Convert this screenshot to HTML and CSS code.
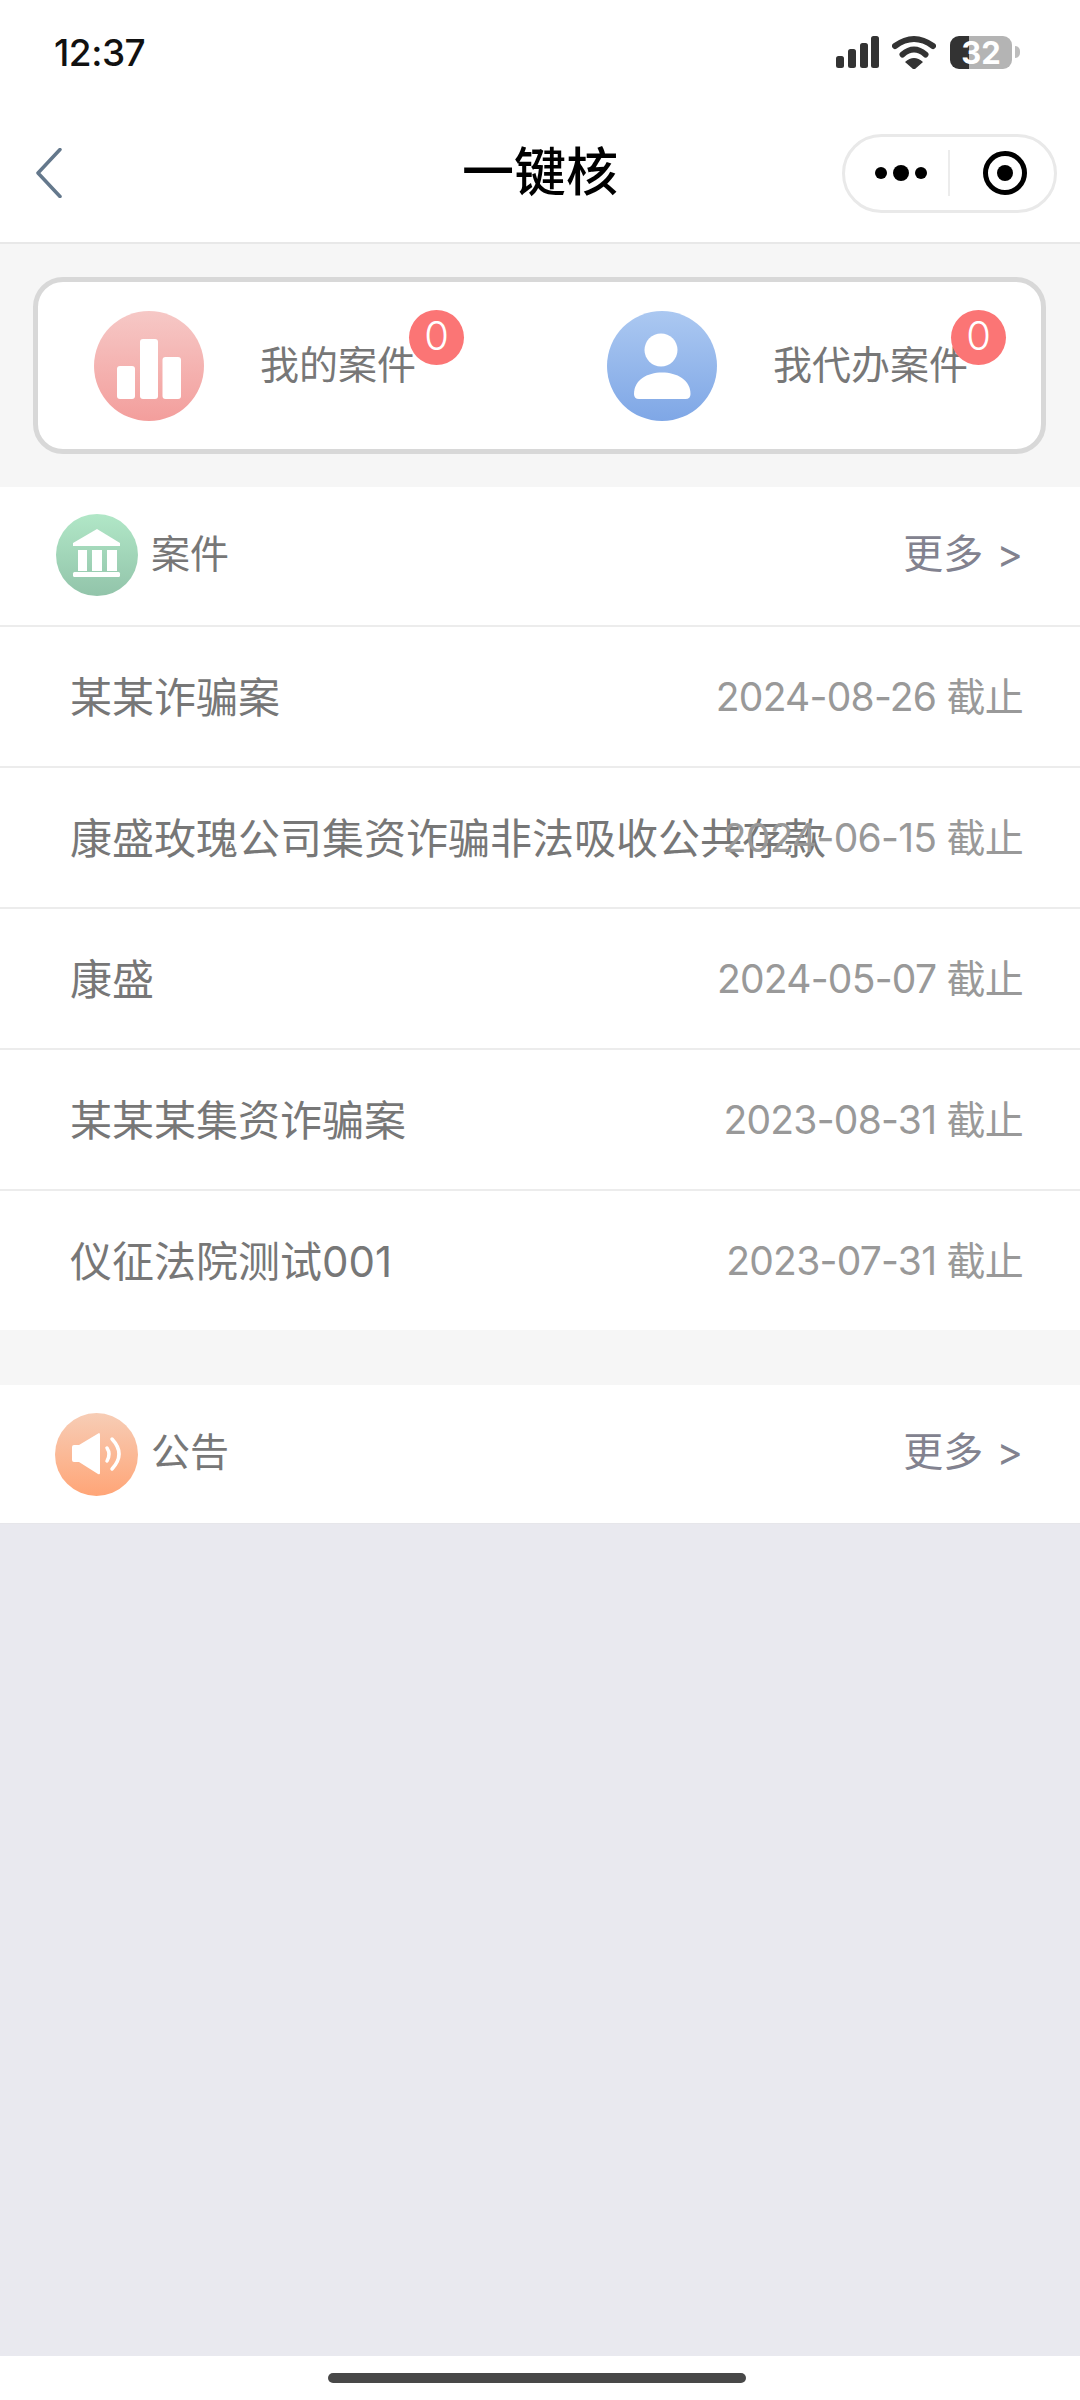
FILE: index.html
```html
<!DOCTYPE html>
<html lang="zh-CN">
<head>
<meta charset="utf-8">
<title>一键核</title>
<link rel="stylesheet" href="styles.css">
</head>
<body>
<div class="page">
  <header class="top">
    <div class="status">
      <span class="time">12:37</span>
      <div class="status-icons">
        <svg class="signal" width="43" height="32" viewBox="0 0 43 32"><rect x="0" y="20" width="8" height="12" rx="2.5"/><rect x="12" y="13" width="8" height="19" rx="2.5"/><rect x="24" y="7" width="8" height="25" rx="2.5"/><rect x="35" y="0" width="8" height="32" rx="2.5"/></svg>
        <svg class="wifi" width="44" height="34" viewBox="0 0 44 34"><path d="M3 11Q22 -3 41 11" fill="none" stroke="#333" stroke-width="6" stroke-linecap="round"/><path d="M10.500 19.500Q22 9.500 33.500 19.500" fill="none" stroke="#333" stroke-width="6" stroke-linecap="round"/><path d="M13 27Q22 19 31 27L23 34Q22 35 21 34Z" fill="#333"/></svg>
        <div class="battery"><span class="battery-num">32</span></div>
        <span class="battery-nub"></span>
      </div>
    </div>
    <nav class="nav">
      <svg class="back" width="26" height="50" viewBox="0 0 26 50"><path d="M24 1.500L2 25L24 48.500" fill="none" stroke="#64788c" stroke-width="3.500" stroke-linecap="round" stroke-linejoin="round"/></svg>
      <h1 class="title">一键核</h1>
      <div class="capsule">
        <svg class="more" width="52" height="16" viewBox="0 0 52 16"><circle cx="6" cy="8" r="6"/><circle cx="26" cy="8" r="8"/><circle cx="46" cy="8" r="6"/></svg>
        <span class="capsule-line"></span>
        <svg class="target" width="44" height="44" viewBox="0 0 44 44"><circle cx="22" cy="22" r="19.500" fill="none" stroke="#000" stroke-width="5"/><circle cx="22" cy="22" r="8"/></svg>
      </div>
    </nav>
  </header>

  <section class="summary">
    <div class="card">
      <div class="stat stat-first">
        <svg class="stat-icon" width="110" height="110" viewBox="0 0 110 110"><defs><linearGradient id="gr" x1="0" y1="0" x2="0" y2="1"><stop offset="0" stop-color="#f6c8c6"/><stop offset="1" stop-color="#f39e9c"/></linearGradient></defs><circle cx="55" cy="55" r="55" fill="url(#gr)"/><rect x="23" y="55" width="18" height="33" rx="3" fill="#fff"/><rect x="46" y="28" width="18" height="60" rx="3" fill="#fff"/><rect x="68.500" y="46" width="18.500" height="42" rx="3" fill="#fff"/></svg>
        <div class="stat-label">我的案件<span class="badge badge-first">0</span></div>
      </div>
      <div class="stat">
        <svg class="stat-icon" width="110" height="110" viewBox="0 0 110 110"><defs><linearGradient id="gb" x1="0" y1="0" x2="0" y2="1"><stop offset="0" stop-color="#abc8f1"/><stop offset="1" stop-color="#7fa7e6"/></linearGradient></defs><circle cx="55" cy="55" r="55" fill="url(#gb)"/><circle cx="54" cy="39" r="16.500" fill="#fff"/><path d="M32 88Q27 88 27 83C27 69 40 61.500 55 61.500C70 61.500 83.500 69 83.500 83Q83.500 88 78.500 88Z" fill="#fff"/></svg>
        <div class="stat-label">我代办案件<span class="badge badge-second">0</span></div>
      </div>
    </div>
  </section>

  <section class="panel">
    <div class="panel-head panel-head-line">
      <div class="panel-name">
        <svg class="panel-icon" width="82" height="82" viewBox="0 0 82 82"><defs><linearGradient id="gg" x1="0" y1="0" x2="0" y2="1"><stop offset="0" stop-color="#b1e7c7"/><stop offset="1" stop-color="#92c4aa"/></linearGradient></defs><circle cx="41" cy="41" r="41" fill="url(#gg)"/><path d="M41 15L64 29V32H17V29Z" fill="#fff"/><rect x="22" y="36" width="9" height="21" fill="#fff"/><rect x="36" y="36" width="10" height="21" fill="#fff"/><rect x="51" y="36" width="10" height="21" fill="#fff"/><rect x="17" y="58" width="47" height="5" rx="1.500" fill="#fff"/></svg>
        <span class="panel-label">案件</span>
      </div>
      <span class="more-link">更多 &gt;</span>
    </div>
    <div class="row"><span class="row-title">某某诈骗案</span><span class="row-date">2024-08-26 截止</span></div>
    <div class="row"><span class="row-title">康盛玫瑰公司集资诈骗非法吸收公共存款</span><span class="row-date">2024-06-15 截止</span></div>
    <div class="row"><span class="row-title">康盛</span><span class="row-date">2024-05-07 截止</span></div>
    <div class="row"><span class="row-title">某某某集资诈骗案</span><span class="row-date">2023-08-31 截止</span></div>
    <div class="row row-last"><span class="row-title">仪征法院测试001</span><span class="row-date">2023-07-31 截止</span></div>
  </section>

  <section class="panel panel-notice">
    <div class="panel-head panel-head-notice">
      <div class="panel-name">
        <svg width="83" height="83" viewBox="0 0 83 83"><defs><linearGradient id="go" x1="0" y1="0" x2="0" y2="1"><stop offset="0" stop-color="#f7cdb6"/><stop offset="1" stop-color="#ffa577"/></linearGradient></defs><circle cx="41.500" cy="41.500" r="41.500" fill="url(#go)"/><path d="M17 34Q17 32 19 32H24L44 20Q45 20 45 22V60Q45 62 43 61L24 49H19Q17 49 17 47Z" fill="#fff"/><path d="M52 35Q56 41 52 48" fill="none" stroke="#fff" stroke-width="3.500" stroke-linecap="round"/><path d="M57 26Q71 41 57 56" fill="none" stroke="#fff" stroke-width="3.500" stroke-linecap="round"/></svg>
        <span class="panel-label">公告</span>
      </div>
      <span class="more-link">更多 &gt;</span>
    </div>
  </section>

  <div class="filler"></div>
  <footer class="home"><span class="home-bar"></span></footer>
</div>
</body>
</html>
```

FILE: styles.css
```css
* { box-sizing: border-box; }
html, body { margin: 0; padding: 0; }
body {
  background: #fff;
  font-family: Inter, "Noto Sans CJK SC", sans-serif;
}
.page {
  width: 1080px;
  height: 2400px;
  display: flex;
  flex-direction: column;
  overflow: hidden;
  background: #f6f6f6;
}

/* header */
.top { height: 244px; background: #fff; border-bottom: 2px solid #e8e8e8; flex: none; }
.status {
  height: 104px;
  display: flex;
  justify-content: space-between;
  align-items: center;
  padding: 0 60px 0 54px;
}
.time { font-size: 37px; font-weight: 500; color: #111; letter-spacing: -0.5px; }
.status-icons { display: flex; align-items: center; }
.signal { fill: #333; margin-right: 13px; }
.wifi { margin-right: 14px; }
.battery {
  width: 62px;
  height: 33px;
  border-radius: 9px;
  background: linear-gradient(90deg, #333 0, #333 31%, #b4b4b4 31%, #b4b4b4 100%);
  display: flex;
  align-items: center;
  justify-content: center;
}
.battery-num { color: #fff; font-size: 31px; font-weight: 700; line-height: 33px; }
.battery-nub {
  width: 5px;
  height: 12px;
  margin-left: 3px;
  background: #bdbdbd;
  border-radius: 0 5px 5px 0;
}
.nav {
  height: 138px;
  display: grid;
  grid-template-columns: 1fr auto 1fr;
  align-items: center;
}
.back { margin-left: 36px; }
.title {
  margin: 0;
  font-size: 52px;
  font-weight: 500;
  line-height: 60px;
  color: #000;
}
.capsule {
  justify-self: end;
  margin-right: 23px;
  width: 215px;
  height: 79px;
  border: 3px solid #e9e9e9;
  border-radius: 40px;
  display: flex;
  align-items: center;
  padding-left: 30px;
}
.more { flex: none; }
.capsule-line { width: 2px; height: 46px; background: #ececec; margin: 0 33px 0 21px; flex: none; }
.target { flex: none; }

/* summary card */
.summary { padding: 33px 34px 33px 33px; height: 243px; flex: none; }
.card {
  height: 177px;
  background: #fff;
  border: 5px solid #d8d8d8;
  border-radius: 30px;
  display: grid;
  grid-template-columns: 513px 1fr;
  align-items: center;
  padding-left: 56px;
}
.stat { display: flex; align-items: center; }
.stat-icon { flex: none; margin-right: 56px; }
.stat-label {
  position: relative;
  font-size: 39px;
  line-height: 39px;
  color: #777;
  white-space: nowrap;
  margin-bottom: 2px;
}
.badge {
  position: absolute;
  top: -35px;
  width: 55px;
  height: 55px;
  border-radius: 50%;
  background: #fb7575;
  color: #fff;
  font-size: 40px;
  font-weight: 300;
  line-height: 52px;
  text-align: center;
}
.badge-first { left: calc(100% - 7px); }
.badge-second { left: calc(100% - 17px); }

/* panels */
.panel { background: #fff; flex: none; }
.panel-notice { margin-top: 55px; }
.panel-head {
  display: flex;
  justify-content: space-between;
  align-items: center;
  padding: 0 57px 0 56px;
}
.panel-head-line { height: 140px; border-bottom: 2px solid #ececec; }
.panel-head-notice { height: 138px; padding-left: 55px; }
.panel-name { display: flex; align-items: center; gap: 13px; font-size: 39px; color: #777; }
.panel-name svg { flex: none; }
.panel-icon { margin-bottom: 2px; }
.panel-label { line-height: 46px; margin-bottom: 4px; }
.more-link { font-size: 40px; line-height: 46px; margin-bottom: 4px; color: #82828f; word-spacing: 2px; }

.row {
  height: 141px;
  display: grid;
  align-items: center;
  padding: 0 57px 4px 70px;
  border-bottom: 2px solid #ececec;
}
.row-last { border-bottom: 0; height: 139px; }
.row-title, .row-date { grid-area: 1 / 1; white-space: nowrap; }
.row-title { justify-self: start; font-size: 42px; color: #777; }
.row-date { justify-self: end; font-size: 39px; letter-spacing: -0.75px; color: #999; margin-bottom: 2px; }

.filler { flex: 1; background: #e9e9ef; border-top: 1px solid #e6e6ea; }
.home { height: 44px; flex: none; background: #fff; display: flex; justify-content: center; padding: 17px 6px 0 0; }
.home-bar { width: 418px; height: 10px; border-radius: 5px; background: #484848; }
```
